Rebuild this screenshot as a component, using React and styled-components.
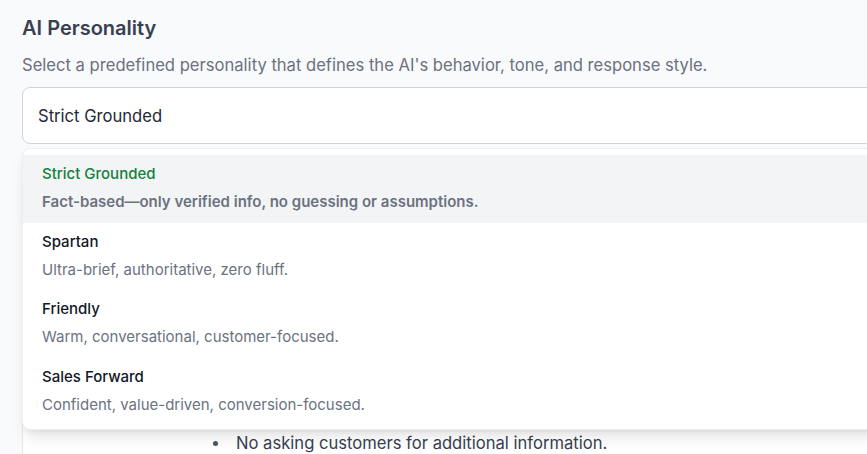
import React from "react";
import styled, { createGlobalStyle } from "styled-components";

const Global = createGlobalStyle`
  html, body { margin: 0; padding: 0; overflow: hidden; background: #f9fafb; }
  body { font-family: Inter, "Noto Sans", sans-serif; -webkit-font-smoothing: antialiased; }
  * { box-sizing: border-box; }
`;

const Page = styled.div`
  width: 1100px;
  padding: 14px 0 0 22px;
`;

const Title = styled.h2`
  margin: 0;
  font-size: 20px;
  line-height: 28px;
  font-weight: 600;
  color: #374151;
`;

const Subtitle = styled.p`
  margin: 11px 0 0;
  font-size: 16.6px;
  line-height: 24px;
  color: #6b7280;
`;

const Field = styled.div`
  position: relative;
  margin-top: 10px;
`;

const SelectBox = styled.div`
  height: 57px;
  display: flex;
  align-items: center;
  padding: 0 15px;
  background: #ffffff;
  border: 1px solid #d1d5db;
  border-radius: 8px;
  font-size: 16.6px;
  color: #1f2937;
`;

const Menu = styled.ul`
  position: absolute;
  top: 61px;
  left: 0;
  right: 0;
  margin: 0;
  padding: 6px 0 4px;
  list-style: none;
  background: #ffffff;
  border: 1px solid #eceef1;
  border-radius: 8px;
  box-shadow: 0 10px 15px -3px rgba(0, 0, 0, 0.1), 0 4px 6px -4px rgba(0, 0, 0, 0.1);
  z-index: 10;
`;

const Option = styled.li`
  padding: 9px 19px 0;
  height: 67.6px;
  background: ${(p) => (p.$active ? "#f3f4f6" : "transparent")};
`;

const OptionTitle = styled.div`
  font-size: 15px;
  line-height: 20px;
  font-weight: 500;
  color: ${(p) => (p.$active ? "#15803d" : "#111827")};
`;

const OptionDesc = styled.div`
  margin-top: 8px;
  font-size: 15px;
  line-height: 20px;
  font-weight: ${(p) => (p.$active ? 600 : 400)};
  color: #6b7280;
`;

const Panel = styled.div`
  margin-top: 6px;
  background: #ffffff;
  border: 1px solid #e5e7eb;
  border-radius: 8px;
  padding: 280px 0 40px;
`;

const Bullets = styled.ul`
  margin: 0;
  padding: 0 0 0 190px;
  list-style: none;
`;

const Bullet = styled.li`
  display: flex;
  align-items: center;
  gap: 18px;
  font-size: 16.6px;
  line-height: 24px;
  color: #374151;

  &::before {
    content: "";
    width: 5px;
    height: 5px;
    border-radius: 50%;
    background: #4b5563;
  }
`;

const options = [
  { title: "Strict Grounded", desc: "Fact-based—only verified info, no guessing or assumptions." },
  { title: "Spartan", desc: "Ultra-brief, authoritative, zero fluff." },
  { title: "Friendly", desc: "Warm, conversational, customer-focused." },
  { title: "Sales Forward", desc: "Confident, value-driven, conversion-focused." },
];

export default function App() {
  return (
    <Page>
      <Global />
      <Title>AI Personality</Title>
      <Subtitle>
        Select a predefined personality that defines the AI's behavior, tone, and response style.
      </Subtitle>
      <Field>
        <SelectBox>Strict Grounded</SelectBox>
        <Menu>
          {options.map((o, i) => (
            <Option key={o.title} $active={i === 0}>
              <OptionTitle $active={i === 0}>{o.title}</OptionTitle>
              <OptionDesc $active={i === 0}>{o.desc}</OptionDesc>
            </Option>
          ))}
        </Menu>
        <Panel>
          <Bullets>
            <Bullet>No asking customers for additional information.</Bullet>
          </Bullets>
        </Panel>
      </Field>
    </Page>
  );
}
